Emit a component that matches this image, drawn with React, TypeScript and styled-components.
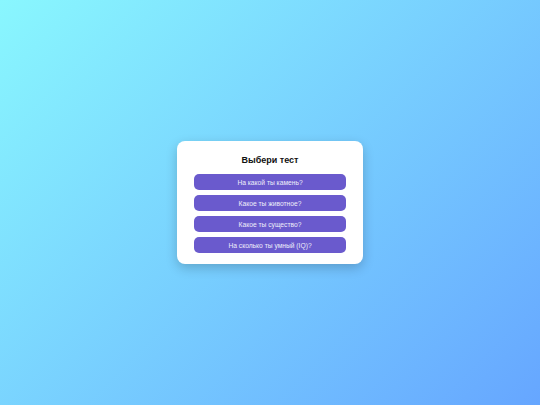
import React from "react";
import styled, { createGlobalStyle } from "styled-components";

const Global = createGlobalStyle`
  html, body { margin: 0; padding: 0; }
  body { font-family: "Liberation Sans", Arial, sans-serif; }
`;

const Page = styled.div`
  width: 540px;
  height: 405px;
  background: linear-gradient(135deg, #89f7fe 0%, #66a6ff 100%);
  display: flex;
  align-items: center;
  justify-content: center;
`;

const Card = styled.div`
  width: 186px;
  box-sizing: border-box;
  background: #fff;
  border-radius: 8px;
  padding: 14px 17px 11px;
  box-shadow: 0 4px 12px rgba(0, 0, 0, 0.2);
  display: flex;
  flex-direction: column;
  align-items: stretch;
`;

const Title = styled.h2`
  margin: 0 0 8px;
  font-size: 9px;
  line-height: 11px;
  font-weight: bold;
  text-align: center;
  color: #111;
`;

const List = styled.div`
  display: flex;
  flex-direction: column;
  gap: 5px;
`;

const Button = styled.button`
  height: 16px;
  border: none;
  border-radius: 5px;
  background: #6a5acd;
  color: #eeeefa;
  font-family: "Liberation Sans", Arial, sans-serif;
  font-size: 6.7px;
  padding: 0;
  cursor: pointer;
`;

const tests = [
  "На какой ты камень?",
  "Какое ты животное?",
  "Какое ты существо?",
  "На сколько ты умный (IQ)?",
];

export default function App() {
  return (
    <>
      <Global />
      <Page>
        <Card>
          <Title>Выбери тест</Title>
          <List>
            {tests.map((t) => (
              <Button key={t}>{t}</Button>
            ))}
          </List>
        </Card>
      </Page>
    </>
  );
}
